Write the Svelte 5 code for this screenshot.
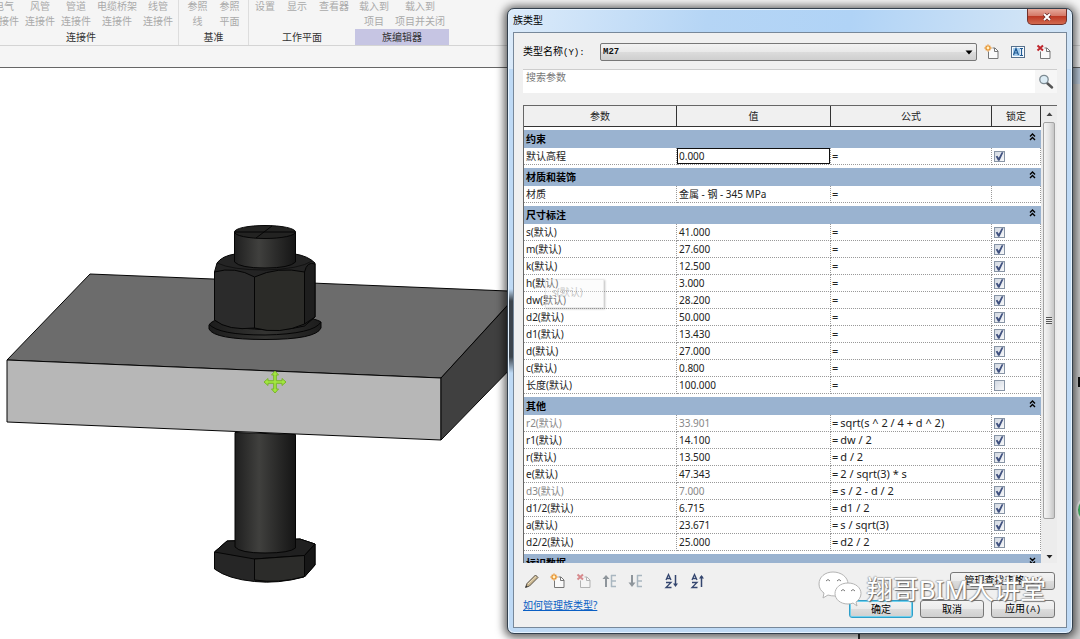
<script>
  const panels = [
    {
      title: '连接件', kind: 'first',
      tools: [['电气', '连接件'], ['风管', '连接件'], ['管道', '连接件'], ['电缆桥架', '连接件'], ['线管', '连接件']]
    },
    { title: '基准', kind: 'datum', tools: [['参照', '线'], ['参照', '平面']] },
    { title: '工作平面', kind: 'plane', tools: [['设置', ''], ['显示', ''], ['查看器', '']] },
    { title: '族编辑器', kind: 'editor', tools: [['载入到', '项目'], ['载入到', '项目并关闭']] }
  ];

  const row = (name, value, formula = '', locked = true, dim = false) => ({ name, value, formula, locked, dim });

  let sections = $state([
    { title: '约束', rows: [{ ...row('默认高程', '0.000'), editing: true }] },
    { title: '材质和装饰', rows: [row('材质', '金属 - 钢 - 345 MPa', '', null)] },
    {
      title: '尺寸标注',
      rows: [
        row('s(默认)', '41.000'),
        row('m(默认)', '27.600'),
        row('k(默认)', '12.500'),
        row('h(默认)', '3.000'),
        row('dw(默认)', '28.200'),
        row('d2(默认)', '50.000'),
        row('d1(默认)', '13.430'),
        row('d(默认)', '27.000'),
        row('c(默认)', '0.800'),
        row('长度(默认)', '100.000', '', false)
      ]
    },
    {
      title: '其他',
      rows: [
        row('r2(默认)', '33.901', 'sqrt(s ^ 2 / 4 + d ^ 2)', true, true),
        row('r1(默认)', '14.100', 'dw / 2'),
        row('r(默认)', '13.500', 'd / 2'),
        row('e(默认)', '47.343', '2 / sqrt(3) * s'),
        row('d3(默认)', '7.000', 's / 2 - d / 2', true, true),
        row('d1/2(默认)', '6.715', 'd1 / 2'),
        row('a(默认)', '23.671', 's / sqrt(3)'),
        row('d2/2(默认)', '25.000', 'd2 / 2')
      ]
    },
    { title: '标识数据', rows: [], closed: true }
  ]);
</script>

{#snippet page(mark)}
  <svg width="16" height="16" viewBox="0 0 16 16" aria-hidden="true">
    <path d="M4.500 7.500V14.500H14V7L11 4H8.500" fill="#fafafa" stroke="#777" />
    <path d="M10.500 4V7.500H14" fill="none" stroke="#777" />
    {#if mark === 'new'}
      <path d="M4 0.500V7.500M0.500 4H7.500M1.700 1.700L6.300 6.300M6.300 1.700L1.700 6.300" stroke="#e8922e" stroke-width="1.300" />
      <circle cx="4" cy="4" r="1.400" fill="#fff3c8" />
    {:else}
      <path d="M1.500 1.500L7 6.500M7 1.500L1.500 6.500" stroke="#c0272d" stroke-width="2" />
    {/if}
  </svg>
{/snippet}

{#snippet indent(up)}
  <svg width="16" height="16" viewBox="0 0 16 16" aria-hidden="true">
    <path d={up ? 'M4 14V5' : 'M4 2V10'} stroke="#8e959b" stroke-width="2" />
    <path d={up ? 'M0.500 6L4 2L7.500 6Z' : 'M0.500 9.500L4 14L7.500 9.500Z'} fill="#8e959b" />
    <path d="M9 2.500H14M9 8H14M9 13.500H14M9.500 2V14" stroke="#a9b6c0" fill="none" stroke-width="1.500" />
  </svg>
{/snippet}

{#snippet sort(up)}
  <svg width="16" height="16" viewBox="0 0 16 16" aria-hidden="true">
    <path d="M2 7L4.500 1.500L7 7M3 5.500H6M2 9.500H7L2 14.500H7.500" fill="none" stroke="#34466f" stroke-width="1.300" />
    <path d={up ? 'M11.500 14V3' : 'M11.500 2V12'} stroke="#34466f" stroke-width="1.500" />
    <path d={up ? 'M9 5.500L11.500 2L14 5.500Z' : 'M9 10.500L11.500 14L14 10.500Z'} fill="#34466f" />
  </svg>
{/snippet}

<div class="app">
  <header class="ribbon">
    {#each panels as panel}
      <section class="panel {panel.kind}">
        <div class="tools">
          {#each panel.tools as [top, bottom]}
            <button class="tool" disabled><span>{top}</span><span>{bottom}</span></button>
          {/each}
        </div>
        <h2>{panel.title}</h2>
      </section>
    {/each}
  </header>
  <div class="options"></div>

  <main class="view">
    <svg class="model" width="520" height="571" viewBox="0 68 520 571" aria-label="M27">
      <defs>
        <linearGradient id="shaft">
          <stop offset="0" stop-color="#1f1f1f" />
          <stop offset=".4" stop-color="#40403e" />
          <stop offset=".7" stop-color="#2a2a29" />
          <stop offset="1" stop-color="#151515" />
        </linearGradient>
        <linearGradient id="rim">
          <stop offset="0" stop-color="#1c1c1c" />
          <stop offset=".5" stop-color="#343432" />
          <stop offset="1" stop-color="#1c1c1c" />
        </linearGradient>
      </defs>
      <g stroke="#050505" stroke-width="1" stroke-linejoin="round">
        <path d="M90 274L520 291.500L441 378L7 360Z" fill="#6c6c6c" />
        <path d="M7 360L441 378V440L7 422Z" fill="#b7b7b7" />
        <path d="M441 378L520 292V359L441 440Z" fill="#404040" />

        <path d="M214.500 552L227 541L300 539L315 544V565L304 577Q278 584 254.500 581.500Q228 579 214.500 569Z" fill="#262626" />
        <path d="M214.500 552L227 541L300 539L315 544L304.500 555.500L254.500 559Z" fill="#202020" />
        <path d="M254.500 559L304.500 555.500V576.500Q278 584 254.500 580Z" fill="#2c2c2a" />
        <path d="M304.500 555.500L315 544V565L304.500 577Z" fill="#171717" />
        <path d="M235 432.500L295.500 434.500V548Q290 553 265 553Q240 553 235 547Z" fill="url(#shaft)" />

        <path d="M209 325V329Q214 339.500 265 339.500Q316 339.500 321 328V322Q310 315 265 315Q214 315 209 325Z" fill="url(#rim)" />
        <path d="M209 324Q218 335 265 335Q314 334 321 322" fill="none" />
        <path d="M214.500 272L217 263Q222 256 235 254L295 254Q308 256 315 263V317L304.500 326Q280 332 254.500 329Q225 328 214.500 320Z" fill="#242424" />
        <path d="M217 263Q232 270 265 270Q300 269 312 261" fill="none" stroke-width=".6" />
        <path d="M214.500 272Q235 266 254.500 277V328Q228 331 214.500 320Z" fill="#2b2b2b" />
        <path d="M254.500 277Q278 266 304.500 272V324Q280 335 254.500 328Z" fill="#2b2b28" />
        <path d="M304.500 272Q307 261 315 264V317L304.500 324Z" fill="#1e1e1e" />
        <path d="M234.500 232V262Q240 268 265 268Q290 268 295.500 262V232Z" fill="url(#shaft)" />
        <ellipse cx="265" cy="232" rx="30.500" ry="6.500" fill="#232322" />
        <path d="M235 232H295M256 238L272 226" fill="none" />
      </g>
      <g stroke-linejoin="round">
        <path d="M273.700 380.700V375H271.500L275 371L278.500 375H276.300V380.700H282V378.500L286 382L282 385.500V383.300H276.300V389H278.500L275 393L271.500 389H273.700V383.300H268V385.500L264 382L268 378.500V380.700Z" fill="#a2e640" stroke="#79b52a" />
      </g>
    </svg>
    <div class="edge"><i class="tick"></i><i class="ball"></i></div>
  </main>

  <div class="dialog" role="dialog" aria-labelledby="dialog-title">
    <div class="titlebar">
      <h1 id="dialog-title">族类型</h1>
      <button class="close" aria-label="关闭">
        <svg width="10" height="8" viewBox="0 0 10 8" aria-hidden="true">
          <path d="M2 1L8 7M8 1L2 7" stroke="#6b2a25" stroke-width="3.500" />
          <path d="M2 1L8 7M8 1L2 7" stroke="#fff" stroke-width="2" />
        </svg>
      </button>
    </div>

    <div class="client">
      <div class="type-row">
        <label for="type">类型名称<span class="mono">(Y):</span></label>
        <div class="combo">
          <select id="type"><option>M27</option></select>
          <svg width="8" height="5" viewBox="0 0 8 5" aria-hidden="true"><path d="M0.500 0.500H7.500L4 4.500Z" fill="#000" /></svg>
        </div>
        <div class="type-tools">
          <button class="icon" aria-label="新建类型">{@render page('new')}</button>
          <button class="icon" aria-label="重命名类型">
            <svg width="16" height="16" viewBox="0 0 16 16" aria-hidden="true">
              <rect x="1.500" y="2.500" width="13" height="11" fill="#f7fbff" stroke="#56718d" />
              <rect x="3" y="4" width="7" height="8" fill="#a5cdee" />
              <path d="M3.500 11L6 4.500L8.500 11M4.500 9H7.500M10 4.500H13M10 11.500H13M11.500 4.500V11.500" fill="none" stroke="#205a93" stroke-width="1.200" />
            </svg>
          </button>
          <button class="icon" aria-label="删除类型">{@render page('delete')}</button>
        </div>
      </div>

      <div class="search">
        <input type="text" placeholder="搜索参数" aria-label="搜索参数" />
        <button class="find" aria-label="搜索">
          <svg width="16" height="16" viewBox="0 0 16 16" aria-hidden="true">
            <path d="M9 9L14 13.500" stroke="#555" stroke-width="2.500" stroke-linecap="round" />
            <circle cx="6" cy="5.500" r="4.200" fill="#dcecf5" stroke="#7d8a92" stroke-width="1.300" />
          </svg>
        </button>
      </div>

      <div class="grid">
        <div class="sheet">
          <table>
            <colgroup><col class="c-name" /><col class="c-value" /><col class="c-formula" /><col class="c-lock" /></colgroup>
            <thead>
              <tr><th>参数</th><th>值</th><th>公式</th><th>锁定</th></tr>
            </thead>
            {#each sections as section}
              <tbody>
                <tr class="section">
                  <th colspan="4">
                    <div>
                      <span>{section.title}</span>
                      <svg class:flip={section.closed} width="7" height="8" viewBox="0 0 7 8" aria-hidden="true">
                        <path d="M1 3.500L3.500 1L6 3.500M1 7L3.500 4.500L6 7" fill="none" stroke="#000" stroke-width="1.400" />
                      </svg>
                    </div>
                  </th>
                </tr>
                {#each section.rows as r}
                  <tr class="param" class:dim={r.dim}>
                    <td>{r.name}</td>
                    <td class:editing={r.editing}>
                      {#if r.editing}
                        <input class="cell-input" type="text" aria-label={r.name} bind:value={r.value} />
                      {:else}{r.value}{/if}
                    </td>
                    <td class="formula"><span class="eq">=</span><span>{r.formula}</span></td>
                    <td>
                      {#if r.locked !== null}
                        <input type="checkbox" aria-label={r.name} bind:checked={r.locked} />
                      {/if}
                    </td>
                  </tr>
                {/each}
              </tbody>
            {/each}
          </table>
        </div>
        <div class="scrollbar" aria-hidden="true">
          <svg width="7" height="4" viewBox="0 0 7 4"><path d="M0.500 4L3.500 0.500L6.500 4Z" fill="#444" /></svg>
          <div class="thumb"><i></i></div>
          <svg width="7" height="4" viewBox="0 0 7 4"><path d="M0.500 0L3.500 3.500L6.500 0Z" fill="#222" /></svg>
        </div>
      </div>

      <div class="bar">
        <div class="bar-tools">
          <button class="icon" aria-label="编辑参数">
            <svg width="16" height="16" viewBox="0 0 16 16" aria-hidden="true">
              <path d="M1.500 14.500L3 10.500L11.500 2L14 4.500L5.500 13Z" fill="#c9b58e" stroke="#5b554c" />
              <path d="M4 11L12 3.500" stroke="#f1e4c6" />
              <path d="M1.500 14.500L2.300 12.300L3.700 13.700Z" fill="#333" />
            </svg>
          </button>
          <button class="icon" aria-label="新建参数">{@render page('new')}</button>
          <button class="icon faded" aria-label="删除参数" disabled>{@render page('delete')}</button>
          <button class="icon" aria-label="上移" disabled>{@render indent(true)}</button>
          <button class="icon" aria-label="下移" disabled>{@render indent(false)}</button>
          <button class="icon apart" aria-label="升序排序">{@render sort(false)}</button>
          <button class="icon" aria-label="降序排序">{@render sort(true)}</button>
        </div>
        <button class="push wide">管理查找表格<span class="mono">(G)</span></button>
      </div>

      <div class="foot">
        <a href="#help">如何管理族类型?</a>
        <div class="actions">
          <button class="push primary">确定</button>
          <button class="push">取消</button>
          <button class="push">应用<span class="mono">(A)</span></button>
        </div>
      </div>
    </div>

    <div class="ghost">s(默认)</div>

    <div class="watermark">
      <svg width="44" height="36" viewBox="0 0 44 36" aria-hidden="true">
        <g fill="#fff" stroke="#b4b4b4" stroke-width="1">
          <path d="M15 1C7 1 1 6 1 13C1 17 3 20 6 22L5 27L10 24Q13 25 17 25C25 25 30 20 30 13C30 6 23 1 15 1Z" />
          <path d="M30 12C22 12 17 17 17 22.500C17 28 22 33 30 33Q33 33 35 32L39 35L38 31C41 29 43 26 43 22.500C43 17 38 12 30 12Z" />
        </g>
        <path d="M8 10Q10 7 12 10M19 10Q21 7 23 10M23 20Q25 17 27 20M33 20Q35 17 37 20" fill="none" stroke="#777" />
      </svg>
      <span>翔哥BIM大讲堂</span>
    </div>
  </div>
</div>

<style>
  :global(body) { margin: 0; background: #fff; }

  .app {
    position: relative;
    display: flex;
    flex-direction: column;
    min-height: 100vh;
    overflow: hidden;
    font: 10px/15px "Noto Sans", "Noto Sans CJK SC", sans-serif;
    color: #222;
  }
  .app * { box-sizing: border-box; }
  button, input, select { font: inherit; color: inherit; margin: 0; padding: 0; }
  h1, h2 { margin: 0; font: inherit; }

  .ribbon { display: flex; height: 46px; background: #f5f5f5; border-bottom: 1px solid #d4d4d4; }
  .panel { display: flex; flex-direction: column; flex: none; justify-content: space-between; }
  .panel h2 { text-align: center; color: #333; line-height: 16px; }
  .tools { display: flex; justify-content: center; gap: 6px; padding: 0 5px; margin-top: -1px; }
  .tool { display: flex; flex-direction: column; align-items: center; border: 0; background: none; color: #aaa; line-height: 15px; white-space: nowrap; }
  .first { margin-left: -16px; border-right: 1px solid #ddd; }
  .datum { width: 70px; border-right: 1px solid #ddd; }
  .datum .tools { gap: 12px; }
  .plane { width: 106px; }
  .plane .tools { gap: 12px; }
  .editor { width: 94px; }
  .editor .tools { padding: 0 4px; }
  .editor h2 { background: #c6c5e3; }
  .options { height: 22px; background: #f5f5f5; border-bottom: 1px solid #666; }

  .view { flex: 1; display: flex; justify-content: space-between; min-height: 0; background: #fff; }
  .model { flex: none; display: block; }
  .edge { position: relative; width: 222px; background: #cfcfcf; border-left: 2px solid #333; border-top: 16px solid #bccbdc; }
  .tick { position: absolute; right: 0; top: 293px; width: 2px; height: 10px; background: #111; }
  .ball { position: absolute; right: -24px; top: 412px; width: 28px; height: 28px; border: 2px solid #eee; border-radius: 50%; background: #3fb563; }

  .dialog {
    position: absolute;
    inset: 8px 7px 5px 507px;
    display: flex;
    flex-direction: column;
    padding: 0 5px 5px;
    border: 1px solid #33404d;
    border-radius: 7px;
    background:
      linear-gradient(transparent, #3c444c 12px, #3c444c 68px, transparent) 0 280px / 5px 84px no-repeat,
      linear-gradient(100deg, #dcebfa 0, #b5d5f5 35%, #b0d3f6 60%, #cfe3f6 90%) 0 0 / 100% 60px no-repeat,
      #bfdaf5;
    box-shadow: inset 0 0 0 1px #e6f3ff, 0 1px 8px 3px rgba(0, 0, 0, .6);
  }
  .titlebar { display: flex; justify-content: space-between; height: 23px; flex: none; }
  .titlebar h1 { line-height: 22px; color: #000; }
  .close {
    display: grid; place-items: center;
    width: 40px; height: 16px;
    border: 1px solid #70302a; border-top: 0;
    border-radius: 0 0 5px 5px;
    background: linear-gradient(#e7aa9c 0, #d47968 45%, #bd3a25 50%, #d26a50 100%);
  }

  .client {
    flex: 1; min-height: 0;
    display: flex; flex-direction: column;
    padding: 10px 9px 9px;
    border: 1px solid #77889a;
    background: #f0f0f0;
  }
  .mono { font-family: "Liberation Mono", monospace; font-size: 9px; }
  .type-row { display: flex; align-items: center; height: 18px; flex: none; }
  .type-row label { width: 77px; flex: none; color: #000; }
  .combo { position: relative; flex: 1; height: 18px; }
  .combo select {
    display: block; width: 100%; height: 18px; padding: 0 2px;
    appearance: none; border: 1px solid #777; border-radius: 2px;
    background: linear-gradient(#f2f2f2, #e9e9e9 50%, #dcdcdc 50%, #cfcfcf);
    font: bold 9px "Liberation Mono", monospace; color: #111;
  }
  .combo svg { position: absolute; right: 4px; top: 7px; pointer-events: none; }
  .type-tools { display: flex; gap: 10px; margin-left: 7px; padding-right: 5px; }
  .icon { display: grid; place-items: center; width: 16px; height: 16px; border: 0; background: none; }
  .faded { opacity: .5; }

  .search { display: flex; flex: none; height: 24px; margin-top: 8px; border-top: 1px solid #cdcdcd; background: #fff; }
  .search input { flex: 1; min-width: 0; height: 23px; padding: 0 3px 10px; border: 0; background: none; outline: 0; }
  .search input::placeholder { color: #777; opacity: 1; }
  .find { display: grid; place-items: center; width: 22px; border: 0; background: #f6f6f6; }

  .grid { flex: 1; min-height: 0; display: flex; margin-top: 12px; overflow: hidden; border-top: 1px solid #666; border-left: 1px solid #666; contain: size; }
  .sheet { flex: 1; min-width: 0; overflow: hidden; background: #fff; }
  table { width: 100%; table-layout: fixed; border-collapse: separate; border-spacing: 0; }
  .c-name { width: 153px; }
  .c-value { width: 154px; }
  .c-lock { width: 49px; }
  th, td { padding: 0; text-align: left; white-space: nowrap; }
  thead th { height: 21px; border-right: 1px solid #333; border-bottom: 1px solid #333; background: #f0f0f0; font-weight: normal; text-align: center; color: #222; }
  .section th { border-top: 3px solid #fff; background: #9ab3d0; background-clip: padding-box; color: #000; }
  .section div { display: flex; justify-content: space-between; align-items: center; height: 18px; padding: 0 5px 0 2px; line-height: 17px; }
  .section svg { margin-bottom: 4px; }
  .flip { transform: scaleY(-1); }
  .param td { height: 17px; padding-left: 2px; line-height: 16px; border-bottom: 1px dotted #999; border-right: 1px dotted #999; }
  .param.dim td { color: #888; }
  .param.dim td.formula { color: #222; }
  .param td.editing { padding: 0; }
  .param td.formula { padding-left: 1px; font-size: 11px; }
  .eq { margin-right: 2px; }
  .cell-input { display: block; width: 100%; height: 16px; padding: 0 1px; border: 1px solid #111; background: #fff; outline: 0; }

  input[type="checkbox"] {
    appearance: none; display: block; width: 11px; height: 11px; margin-top: 1px;
    border: 1px solid #8794a5; background: linear-gradient(135deg, #d3d9e2, #f7f8fa);
  }
  input[type="checkbox"]:checked::before {
    content: ""; display: block; width: 9px; height: 9px; background: #40517f;
    clip-path: polygon(8% 50%, 26% 42%, 42% 64%, 74% 4%, 94% 4%, 50% 98%, 34% 98%);
  }

  .scrollbar { width: 16px; flex: none; display: flex; flex-direction: column; align-items: center; justify-content: space-between; padding: 6px 1px 4px; background: #ececec; }
  .thumb { flex: 1; display: grid; place-items: center; width: 12px; margin: 6px 0 36px; border: 1px solid #a3a3a3; border-radius: 2px; background: linear-gradient(90deg, #f4f4f4, #e4e4e4 50%, #c6c6c6); }
  .thumb i { width: 6px; height: 7px; background: repeating-linear-gradient(#555 0 1px, #eee 1px 2px); }

  .bar { display: flex; flex: none; justify-content: space-between; align-items: center; height: 18px; margin-top: 9px; padding-right: 2px; }
  .bar-tools { display: flex; gap: 10px; padding-left: 1px; }
  .apart { margin-left: 10px; }
  .foot { display: flex; flex: none; justify-content: space-between; align-items: center; height: 18px; margin-top: 10px; padding-right: 2px; }
  .foot a { color: #0a5fc4; margin-bottom: 8px; }
  .actions { display: flex; gap: 7px; }
  .push {
    width: 64px; height: 18px; border: 1px solid #777; border-radius: 3px; color: #000; line-height: 14px; white-space: nowrap;
    background: linear-gradient(#f3f3f3, #ebebeb 50%, #dddddd 50%, #cfcfcf);
  }
  .wide { width: 105px; }
  .primary { border-color: #2f9fc9; box-shadow: inset 0 0 0 1px #6fd0ee; }

  .ghost {
    position: absolute; left: 37px; top: 270px; width: 59px; height: 29px;
    padding: 5px 6px; color: #999; opacity: .55;
    border: 1px solid #ddd; background: rgba(250, 250, 250, .7); box-shadow: 1px 1px 2px #888;
  }
  .watermark {
    position: absolute; right: 26px; bottom: 26px;
    display: flex; align-items: center; gap: 5px; pointer-events: none;
    font: 26px/36px "Noto Sans", "Noto Sans CJK SC", sans-serif; color: #fff; white-space: nowrap;
    text-shadow: 1px 1px 1px #666, -1px 0 1px #aaa, 0 -1px 1px #bbb;
  }
</style>
